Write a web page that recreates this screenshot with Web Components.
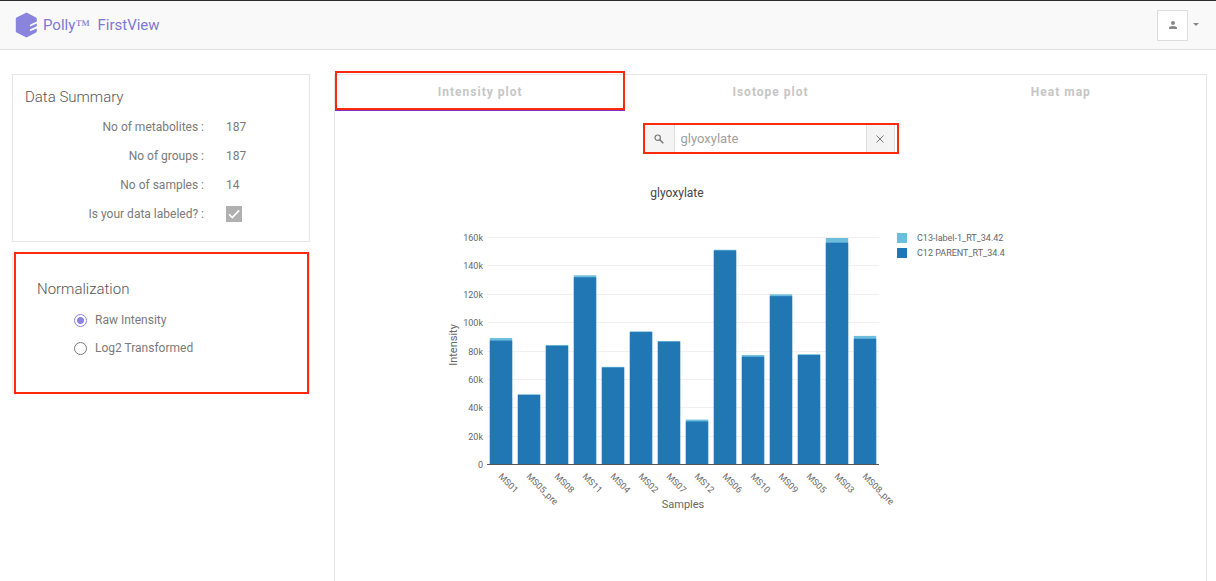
<!DOCTYPE html>
<html lang="en">
<head>
<meta charset="utf-8">
<meta name="viewport" content="width=device-width, initial-scale=1">
<title>Polly FirstView</title>
<style>
  body {
    margin: 0;
    background: #fff;
    color: #777;
    font-family: Roboto, "Liberation Sans", sans-serif;
    font-size: 12px;
  }
</style>
</head>
<body>
<firstview-app></firstview-app>

<script>
  // Small base class: every component fills its shadow root from render().
  class BaseElement extends HTMLElement {
    constructor() {
      super();
      this.attachShadow({ mode: 'open' });
    }

    connectedCallback() {
      this.shadowRoot.innerHTML = this.render();
    }
  }

  class AppHeader extends BaseElement {
    render() {
      return `
        <style>
          :host {
            display: flex;
            align-items: center;
            justify-content: space-between;
            box-sizing: border-box;
            height: 50px;
            padding: 0 17px 0 15px;
            background: #f9f9f9;
            border-top: 1px solid #2b2b2b;
            border-bottom: 1px solid #e2e2e2;
          }
          .brand {
            display: flex;
            align-items: center;
            gap: 5px;
            color: #7f78d6;
            font-size: 15px;
            line-height: 20px;
            text-decoration: none;
          }
          .brand .tm { font-family: "Liberation Serif", serif; }
          .brand .name { white-space: pre; }
          .user { display: flex; align-items: center; gap: 5px; }
          button {
            display: flex;
            align-items: center;
            justify-content: center;
            padding: 0;
            border: 0;
            background: none;
            color: #888;
          }
          .avatar {
            width: 31px;
            height: 31px;
            border: 1px solid #ddd;
            background: #fff;
          }
        </style>
        <a class="brand" href="#">
          <svg width="23" height="26" viewBox="0 0 23 26" aria-hidden="true">
            <path fill="#8a84dc" d="M11.5 .5 21 5.4q.8.5.8 1.4v2.6l-6 2.8q-1.6 1-.8 2.2l6.8-2.8v2.6l-6 2.8q-1.6 1-.8 2.2l6.8-2.8v2.8q0 .8-.8 1.3L11.5 25.5 1.6 20.6q-.8-.5-.8-1.4V6.8q0-.9.8-1.4z"/>
          </svg>
          <span class="name">Polly<span class="tm">™</span>  FirstView</span>
        </a>
        <div class="user">
          <button class="avatar" aria-label="Account">
            <svg width="8" height="8" viewBox="0 0 8 8" aria-hidden="true">
              <circle cx="4" cy="2" r="2" fill="currentColor"/>
              <path d="M0 8V7q0-2 4-2t4 2v1z" fill="currentColor"/>
            </svg>
          </button>
          <button aria-label="Open account menu">
            <svg width="6" height="4" viewBox="0 0 6 4" aria-hidden="true"><path d="M0 0h6L3 3z" fill="currentColor"/></svg>
          </button>
        </div>
      `;
    }
  }

  // Red frame drawn over the edge of whatever is slotted in.
  class FocusFrame extends BaseElement {
    render() {
      return `
        <style>
          :host { display: block; position: relative; }
          :host::after {
            content: "";
            position: absolute;
            inset: var(--frame-inset, 0);
            border: 2px solid #fb2a0d;
            pointer-events: none;
          }
        </style>
        <slot></slot>
      `;
    }
  }

  class SideCard extends BaseElement {
    render() {
      return `
        <style>
          :host {
            display: block;
            padding: var(--card-padding, 10px 12px 13px);
            border: 1px solid #e6e6e6;
            background: #fff;
          }
          h2 {
            margin: 0 0 3px;
            font-size: 15px;
            font-weight: 300;
            line-height: 24px;
            color: #555;
          }
        </style>
        <h2>${this.getAttribute('heading')}</h2>
        <slot></slot>
      `;
    }
  }

  class SummaryRow extends BaseElement {
    render() {
      const label = this.getAttribute('label');
      const isCheck = this.hasAttribute('checked');
      return `
        <style>
          :host {
            display: grid;
            grid-template-columns: 179px 1fr;
            column-gap: 22px;
            align-items: center;
            height: 29px;
            color: #7a7a7a;
          }
          .label { text-align: right; }
          .check { position: relative; display: flex; width: 16px; height: 16px; }
          input {
            appearance: none;
            width: 16px;
            height: 16px;
            margin: 0;
            background: #b0b0b0;
          }
          svg { position: absolute; inset: 0; pointer-events: none; }
        </style>
        ${isCheck
          ? `<label class="label" for="flag">${label} :</label>
             <span class="check">
               <input id="flag" type="checkbox" checked disabled>
               <svg width="16" height="16" viewBox="0 0 16 16" aria-hidden="true"><path d="M3 8.2 6.3 11.6 13.2 4.4" fill="none" stroke="#fff" stroke-width="1.6"/></svg>
             </span>`
          : `<span class="label">${label} :</span><span><slot></slot></span>`}
      `;
    }
  }

  class NormalizationPicker extends BaseElement {
    render() {
      return `
        <style>
          :host { display: block; padding: 2px 0 0 37px; }
          label {
            display: flex;
            align-items: center;
            gap: 8px;
            height: 28px;
            color: #7a7a7a;
          }
          input {
            appearance: none;
            box-sizing: border-box;
            width: 13px;
            height: 13px;
            margin: 0;
            border: 1px solid #777;
            border-radius: 50%;
          }
          input:checked {
            border-color: #8a84dc;
            background: radial-gradient(circle, #8a84dc 3px, transparent 4px);
          }
        </style>
        <label><input type="radio" name="norm" checked>Raw Intensity</label>
        <label><input type="radio" name="norm">Log2 Transformed</label>
      `;
    }
  }

  class PlotTabs extends BaseElement {
    render() {
      return `
        <style>
          :host { display: grid; grid-template-columns: repeat(3, 1fr); }
          button {
            box-sizing: border-box;
            width: 100%;
            height: 36px;
            padding: 0;
            border: 0;
            border-bottom: 2px solid transparent;
            background: none;
            color: #c6c6c6;
            font: bold 12px Roboto, "Liberation Sans", sans-serif;
            letter-spacing: 1px;
          }
          button[aria-selected="true"] { border-bottom-color: #7b2fbf; }
          focus-frame { --frame-inset: -4px 0 1px 0; }
        </style>
        <focus-frame><button role="tab" aria-selected="true">Intensity plot</button></focus-frame>
        <button role="tab" aria-selected="false">Isotope plot</button>
        <button role="tab" aria-selected="false">Heat map</button>
      `;
    }
  }

  class MetaboliteSearch extends BaseElement {
    render() {
      return `
        <style>
          :host {
            display: grid;
            grid-template-columns: 29px 1fr 29px;
            height: 27px;
            padding-right: 2px;
          }
          label, button {
            display: flex;
            align-items: center;
            justify-content: center;
            padding: 0;
            border: 0;
            background: #f4f4f4;
            color: #777;
          }
          button { border-left: 1px solid #ddd; border-right: 1px solid #ddd; }
          input {
            min-width: 0;
            padding: 0 6px;
            border: 0;
            border-left: 1px solid #ddd;
            outline: 0;
            color: #a0a0a0;
            font: 13px Roboto, "Liberation Sans", sans-serif;
          }
        </style>
        <label for="q" aria-label="Search metabolite">
          <svg width="10" height="10" viewBox="0 0 10 10" fill="none" stroke="currentColor" aria-hidden="true">
            <circle cx="3.7" cy="3.7" r="2.7" stroke-width="1.2"/>
            <path d="M5.8 5.8 9.3 9.3" stroke-width="1.5"/>
          </svg>
        </label>
        <input id="q" type="text" value="glyoxylate">
        <button aria-label="Clear search">
          <svg width="8" height="8" viewBox="0 0 8 8" stroke="currentColor" aria-hidden="true"><path d="M.5 .5 7.5 7.5M7.5 .5 .5 7.5"/></svg>
        </button>
      `;
    }
  }

  // Stacked bars: [sample, C12 parent, total], values in thousands.
  const SAMPLES = [
    ['MS01', 87, 88.8],
    ['MS05_pre', 48.7, 49.1],
    ['MS08', 83.3, 83.9],
    ['MS11', 131.6, 133],
    ['MS04', 68, 68.5],
    ['MS02', 93, 93.5],
    ['MS07', 86.2, 86.7],
    ['MS12', 30, 31.3],
    ['MS06', 150.5, 151],
    ['MS10', 75.6, 76.8],
    ['MS09', 118.3, 119.6],
    ['MS05', 76.8, 77.4],
    ['MS03', 156, 159.3],
    ['MS08_pre', 88.3, 90.3]
  ];

  class IntensityChart extends BaseElement {
    render() {
      const left = 47;
      const right = 439;
      const base = 294;
      const top = 67;
      const step = (right - left) / SAMPLES.length;
      const barWidth = step * 0.8;
      const y = value => base - value * (base - top) / 160;

      let grid = '';
      for (let v = 0; v <= 160; v += 20) {
        const gy = Math.round(y(v));
        if (v) grid += `<path class="grid" d="M${left} ${gy + 0.5}H${right}"/>`;
        grid += `<text class="tick" x="43" y="${gy + 4}" text-anchor="end">${v ? v + 'k' : 0}</text>`;
      }

      const bars = SAMPLES.map(([name, parent, total], i) => {
        const x = left + step * (i + 0.1);
        const cx = left + step * (i + 0.5);
        return `
          <rect class="c13" x="${x}" y="${y(total)}" width="${barWidth}" height="${base - y(total)}"/>
          <rect class="c12" x="${x}" y="${y(parent)}" width="${barWidth}" height="${base - y(parent)}"/>
          <text class="tick" transform="translate(${cx - 3} 307) rotate(45)">${name}</text>`;
      }).join('');

      return `
        <style>
          :host { display: block; }
          svg { display: block; width: 100%; height: auto; overflow: visible; }
          text { fill: #666; font-family: Roboto, "Liberation Sans", sans-serif; }
          .title { fill: #444; font-size: 12px; }
          .axis { font-size: 11px; }
          .tick { font-size: 9px; }
          .grid { stroke: #f0f0f0; }
          .zero { stroke: #555; }
          .c13 { fill: #6dbedd; }
          .c12 { fill: #2077b4; }
        </style>
        <svg viewBox="0 0 661 350" role="img" aria-label="Intensity by sample for glyoxylate">
          <text class="title" x="237" y="27" text-anchor="middle">glyoxylate</text>
          ${grid}
          ${bars}
          <path class="zero" d="M${left} ${base + 0.5}H${right}"/>
          <text class="axis" x="243" y="338" text-anchor="middle">Samples</text>
          <text class="axis" transform="translate(17 175) rotate(-90)" text-anchor="middle">Intensity</text>
          <rect class="c13" x="457" y="63" width="10" height="10"/>
          <text class="tick" x="477" y="71">C13-label-1_RT_34.42</text>
          <rect class="c12" x="457" y="78" width="10" height="10"/>
          <text class="tick" x="477" y="86">C12 PARENT_RT_34.4</text>
        </svg>
      `;
    }
  }

  class PlotPanel extends BaseElement {
    render() {
      return `
        <style>
          :host {
            display: flex;
            flex-direction: column;
            border: 1px solid #e6e6e6;
            border-bottom: 0;
          }
          .search {
            --frame-inset: -2px;
            width: 252px;
            margin: 14px auto 18px;
          }
          intensity-chart { width: 100%; max-width: 661px; margin: 0 auto; }
        </style>
        <plot-tabs role="tablist"></plot-tabs>
        <focus-frame class="search"><metabolite-search></metabolite-search></focus-frame>
        <intensity-chart></intensity-chart>
      `;
    }
  }

  class FirstviewApp extends BaseElement {
    render() {
      return `
        <style>
          :host { display: flex; flex-direction: column; min-height: 100vh; }
          main {
            flex: 1;
            display: grid;
            grid-template-columns: 298px minmax(0, 1fr);
            column-gap: 24px;
            padding: 24px 9px 0 12px;
          }
          aside { display: flex; flex-direction: column; gap: 11px; }
          focus-frame { --frame-inset: -1px 1px -1px 2px; }
          .norm { --card-padding: 23px 24px 30px; }
        </style>
        <app-header></app-header>
        <main>
          <aside>
            <side-card heading="Data Summary">
              <summary-row label="No of metabolites">187</summary-row>
              <summary-row label="No of groups">187</summary-row>
              <summary-row label="No of samples">14</summary-row>
              <summary-row label="Is your data labeled?" checked></summary-row>
            </side-card>
            <focus-frame>
              <side-card class="norm" heading="Normalization">
                <normalization-picker></normalization-picker>
              </side-card>
            </focus-frame>
          </aside>
          <plot-panel></plot-panel>
        </main>
      `;
    }
  }

  customElements.define('app-header', AppHeader);
  customElements.define('focus-frame', FocusFrame);
  customElements.define('side-card', SideCard);
  customElements.define('summary-row', SummaryRow);
  customElements.define('normalization-picker', NormalizationPicker);
  customElements.define('plot-tabs', PlotTabs);
  customElements.define('metabolite-search', MetaboliteSearch);
  customElements.define('intensity-chart', IntensityChart);
  customElements.define('plot-panel', PlotPanel);
  customElements.define('firstview-app', FirstviewApp);
</script>
</body>
</html>
